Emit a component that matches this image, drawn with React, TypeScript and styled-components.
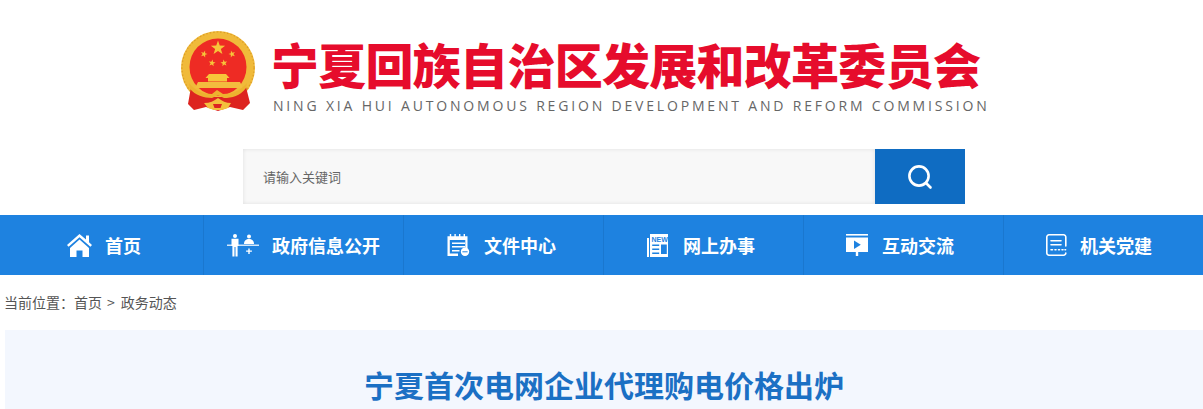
import React from "react";
import styled, { createGlobalStyle } from "styled-components";

const Global = createGlobalStyle`
  html, body { margin: 0; padding: 0; background: #fff; overflow: hidden; }
  body { font-family: "Liberation Sans", "Noto Sans CJK SC", sans-serif; }
`;
const CJK = `"Noto Sans CJK SC", "Liberation Sans", sans-serif`;

const Page = styled.div`
  width: 1203px;
  height: 409px;
  overflow: hidden;
  display: flex;
  flex-direction: column;
`;
const Brand = styled.header`
  display: flex;
  align-items: flex-start;
  gap: 16px;
  padding: 31px 0 0 180px;
  height: 118px;
`;
const BrandText = styled.div`
  display: flex;
  flex-direction: column;
  padding-top: 3px;
`;
const BrandTitle = styled.h1`
  margin: 0 0 0 -1px;
  font: 900 48px/58px ${CJK};
  letter-spacing: -0.72px;
  color: #e60c2c;
  white-space: nowrap;
`;
const BrandSub = styled.div`
  font: 400 14px/18px "Open Sans", "Liberation Sans", sans-serif;
  letter-spacing: 2.82px;
  color: #666;
  white-space: nowrap;
  margin: 5px 0 0 1px;
`;
const SearchRow = styled.form`
  display: flex;
  height: 55px;
  padding-left: 243px;
`;
const SearchInput = styled.div`
  width: 632px;
  box-sizing: border-box;
  background: #f8f8f8;
  box-shadow: inset 0 0 4px rgba(0, 0, 0, 0.1);
  font: 400 13px/55px ${CJK};
  color: #666;
  padding-left: 20px;
`;
const SearchButton = styled.div`
  width: 90px;
  background: #0f6cc2;
  display: flex;
  align-items: center;
  justify-content: center;
`;
const Nav = styled.nav`
  margin-top: 11px;
  height: 60px;
  background: #1e82e0;
  display: grid;
  grid-template-columns: 203px repeat(5, 200px);
`;
const NavItem = styled.a<{ $gap: number; $start: number }>`
  display: flex;
  align-items: center;
  gap: ${(p) => p.$gap}px;
  box-sizing: border-box;
  padding-left: ${(p) => p.$start}px;
  color: #fff;
  font: 700 18px/24px ${CJK};
  white-space: nowrap;
  & + & { border-left: 1px solid #1a77cf; }
`;
const Crumbs = styled.div`
  box-sizing: border-box;
  height: 55px;
  display: flex;
  align-items: center;
  padding: 0 0 2px 4px;
  font: 400 14px/20px ${CJK};
  color: #555;
`;
const CrumbSep = styled.span`
  margin: 0 6px 0 5px;
`;
const Article = styled.main`
  margin-left: 5px;
  flex: 1;
  background: #f3f7fe;
  display: flex;
  justify-content: center;
  padding: 34px 0 0 0;
`;
const ArticleTitle = styled.h2`
  margin: 0;
  font: 700 30px/40px ${CJK};
  color: #1b70c4;
  white-space: nowrap;
`;

const Star = ({ x, y, r, rot = 0 }: { x: number; y: number; r: number; rot?: number }) => {
  const pts: string[] = [];
  for (let i = 0; i < 10; i++) {
    const a = (Math.PI / 5) * i - Math.PI / 2 + rot;
    const rad = i % 2 ? r * 0.4 : r;
    pts.push(`${(x + rad * Math.cos(a)).toFixed(2)},${(y + rad * Math.sin(a)).toFixed(2)}`);
  }
  return <polygon points={pts.join(" ")} fill="#f7c53a" />;
};

const Emblem = () => (
  <svg width="76" height="81" viewBox="0 0 76 81">
    <circle cx="38" cy="37" r="37" fill="#f0ba3a" />
    <circle cx="38" cy="37" r="36" fill="none" stroke="#dc9c26" strokeWidth="1.2" strokeDasharray="1.5 2" />
    <circle cx="38" cy="36" r="28.5" fill="#ee2b24" />
    <Star x={38} y={17} r={7.5} />
    <Star x={24} y={23} r={3.6} rot={0.3} />
    <Star x={52} y={23} r={3.6} rot={-0.3} />
    <Star x={32} y={32} r={3.6} rot={0.15} />
    <Star x={44} y={32} r={3.6} rot={-0.15} />
    <path d="M29 43h17l3.5 4H47v3.5H28V47h-2.5z" fill="#f7c53a" />
    <path d="M18 51h42l3 6H15z" fill="#f3bd3e" />
    <path d="M11 56 L8 73 L14 79 L26 76 L38 80 L50 76 L63 79 L70 72 L66 56 C58 64 46 66 38 66 C30 66 20 64 11 56Z" fill="#dd2420" />
    <path d="M9 52 C15 60 24 63 32 63 L37 59 L43 63 C52 63 60 60 67 52 L66 57 C60 65 52 67 44 67 L38 64 L32 67 C24 67 15 64 10 58Z" fill="#edb22f" />
    <path d="M24 72 C30 72 34 70 38 67 C42 70 46 72 51 72 L48 77 L42 79 H34 L28 77Z" fill="#f3bf3d" />
    <path d="M33 73h9l-1.5 4h-6z" fill="#dd2420" />
  </svg>
);

const SearchIcon = () => (
  <svg width="26" height="26" viewBox="0 0 26 26" fill="none" stroke="#fff" strokeWidth="2.6" strokeLinecap="round">
    <circle cx="12" cy="12" r="9.6" />
    <path d="M19 19l4.5 4.5" />
  </svg>
);
const HomeIcon = () => (
  <svg width="25" height="23" viewBox="0 0 25 23" fill="#fff">
    <path d="M12.5 0 L19 5.6V1.5h3V8.2L25 11l-1.6 1.8L12.5 3.2 1.6 12.8 0 11z" />
    <path d="M12.5 5.6 L22 14v9h-6.5v-6.5h-6V23H3v-9z" />
  </svg>
);
const MeetingIcon = () => (
  <svg width="32" height="23" viewBox="0 0 32 23" fill="#fff">
    <circle cx="8" cy="2" r="2" />
    <path d="M4.5 4.8h7v7.2h-.9V22.6H8.5V13h-1V22.6H5.4V12h-.9z" />
    <circle cx="22" cy="2.4" r="2" />
    <path d="M17 10c0-3.3 2.2-4.9 5-4.9s5 1.6 5 4.9z" />
    <path d="M0 10.6h32v1.2H0z" />
    <path d="M21.3 14.5h1.4v2h2.2v1.3h-2.2V20h-1.4v-2.2h-2.2v-1.3h2.2z" />
  </svg>
);
const FileIcon = () => (
  <svg width="23" height="22" viewBox="0 0 23 22" fill="#fff">
    <path d="M.5 2.2h2.3V0h1.4v2.2h3.2V0h1.4v2.2h3.2V0h1.4v2.2h3.2V0h1.4v2.2h2.5V15h-2.2V6H2.8v13.6H11V22H.5z" />
    <path d="M5 8.4h13v1.6H5zM5 12h13v1.6H5zM5 16h7.5v1.6H5z" />
    <circle cx="18" cy="17.8" r="4.2" />
    <path d="M15.4 17.3h5.2v1h-5.2z" fill="#1e82e0" />
  </svg>
);
const NewsIcon = () => (
  <svg width="22" height="23" viewBox="0 0 22 23" fill="#fff">
    <path d="M0 4h2v19H0z" />
    <path d="M3 0h18v23H3z" />
    <text x="12.7" y="8" fontFamily="Liberation Sans, sans-serif" fontSize="7" fontWeight="700" fill="#1e82e0" textAnchor="middle">NEW</text>
    <path d="M5.2 10.6h7v1.4h-7zM5.2 14.6h7V16h-7zM5.2 18.6h7V20h-7zM14 10.6h5.8V20H14z" fill="#1e82e0" />
  </svg>
);
const ScreenIcon = () => (
  <svg width="22" height="22" viewBox="0 0 22 22" fill="#fff">
    <path d="M0 0h22v1.6H0z" />
    <path d="M0 3.4h22V18H12.2v4H9.8v-4H0z" />
    <path d="M8 6.5v8.6l6.8-4.3z" fill="#1e82e0" />
  </svg>
);
const ListIcon = () => (
  <svg width="21" height="22" viewBox="0 0 21 22" fill="none" stroke="#fff" strokeWidth="1.6" strokeLinecap="round">
    <path d="M19.8 12V3a2.2 2.2 0 0 0-2.2-2.2H3A2.2 2.2 0 0 0 .8 3v16A2.2 2.2 0 0 0 3 21.2h14.6a2.2 2.2 0 0 0 2.2-2.2" />
    <path d="M5 6.7h10M5 10.7h10M5 15.7h1.5M9 15.7h1M12.5 15.7h1M16 15.7h1M19 15.7h.6" />
  </svg>
);

const items = [
  { label: "首页", icon: <HomeIcon />, gap: 13, start: 67 },
  { label: "政府信息公开", icon: <MeetingIcon />, gap: 13, start: 23 },
  { label: "文件中心", icon: <FileIcon />, gap: 14, start: 43 },
  { label: "网上办事", icon: <NewsIcon />, gap: 14, start: 43 },
  { label: "互动交流", icon: <ScreenIcon />, gap: 14, start: 42 },
  { label: "机关党建", icon: <ListIcon />, gap: 13, start: 42 },
];

export default function App() {
  return (
    <Page>
      <Global />
      <Brand>
        <Emblem />
        <BrandText>
          <BrandTitle>宁夏回族自治区发展和改革委员会</BrandTitle>
          <BrandSub>NING XIA HUI AUTONOMOUS REGION DEVELOPMENT AND REFORM COMMISSION</BrandSub>
        </BrandText>
      </Brand>
      <SearchRow>
        <SearchInput>请输入关键词</SearchInput>
        <SearchButton>
          <SearchIcon />
        </SearchButton>
      </SearchRow>
      <Nav>
        {items.map((it) => (
          <NavItem key={it.label} $gap={it.gap} $start={it.start}>
            {it.icon}
            <span>{it.label}</span>
          </NavItem>
        ))}
      </Nav>
      <Crumbs>
        <span>当前位置：</span>
        <span>首页</span>
        <CrumbSep>&gt;</CrumbSep>
        <span>政务动态</span>
      </Crumbs>
      <Article>
        <ArticleTitle>宁夏首次电网企业代理购电价格出炉</ArticleTitle>
      </Article>
    </Page>
  );
}
